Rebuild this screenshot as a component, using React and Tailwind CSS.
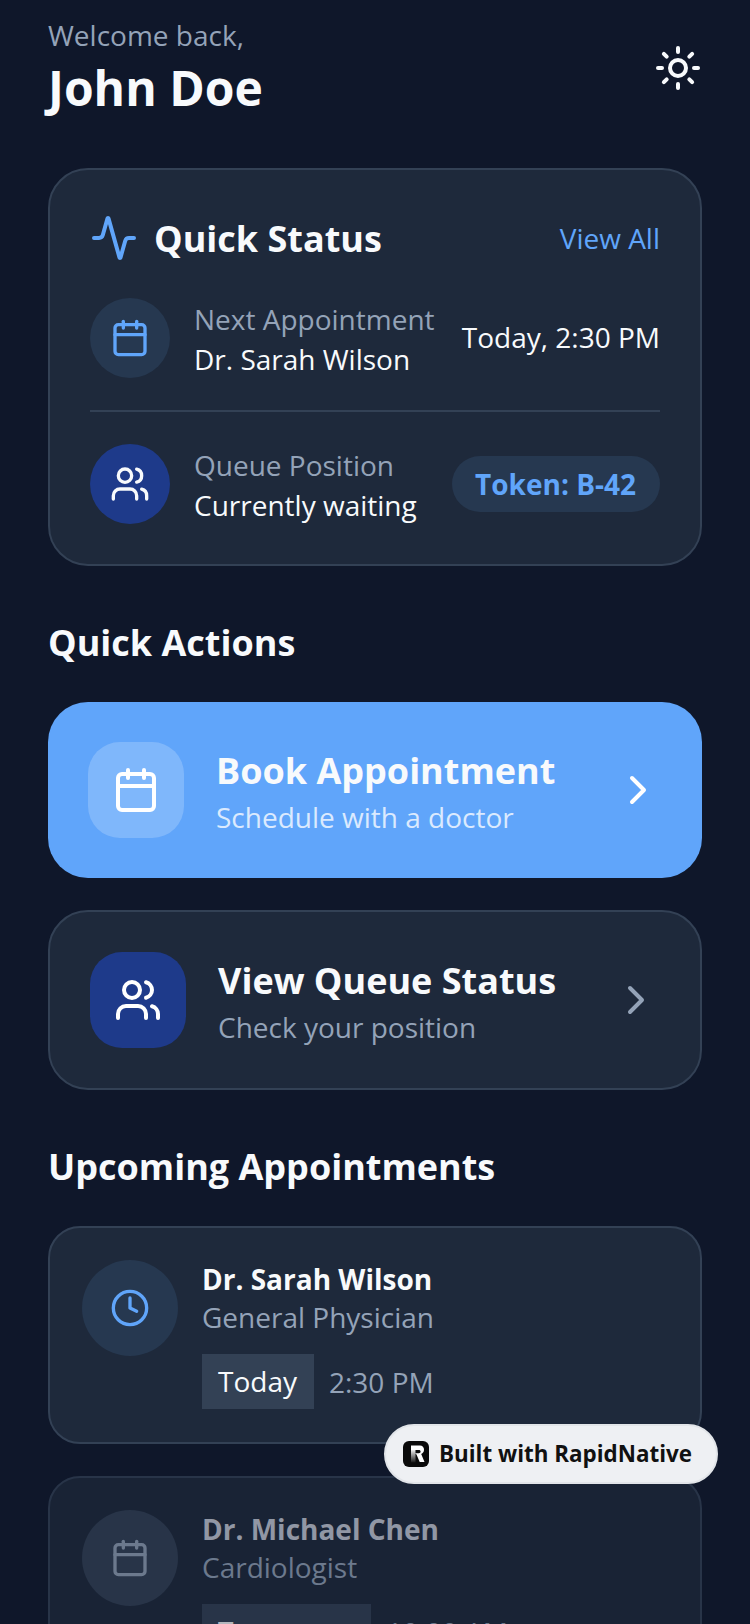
import React from "react";
import { Activity, Calendar, ChevronRight, Clock, Sun, Users } from "lucide-react";

const StatusRow = ({ icon, circle, label, value, right }) => (
  <div className="flex items-center justify-between">
    <div className="flex items-center gap-6">
      <div className={`flex h-20 w-20 items-center justify-center rounded-full ${circle}`}>{icon}</div>
      <div className="-mb-px pt-px">
        <p className="text-[28px] leading-10 text-[#94a3b8]">{label}</p>
        <p className="text-[28px] leading-10 text-[#f8fafc]">{value}</p>
      </div>
    </div>
    {right}
  </div>
);

const ActionCard = ({ card, box, icon, title, sub, subColor, chevron }) => (
  <div className={`flex items-center justify-between rounded-[40px] p-10 ${card}`}>
    <div className="flex items-center gap-8">
      <div className={`flex h-24 w-24 items-center justify-center rounded-[32px] ${box}`}>{icon}</div>
      <div className="py-0.5">
        <p className="text-[36px] leading-[54px] font-bold text-[#f8fafc]">{title}</p>
        <p className={`text-[28px] leading-[38px] ${subColor}`}>{sub}</p>
      </div>
    </div>
    <ChevronRight size={48} strokeWidth={2} className={chevron} />
  </div>
);

const ApptCard = ({ icon, name, spec, day, time, faded }) => (
  <div className={`mb-8 flex gap-6 rounded-[32px] border-2 border-[#334155] bg-[#1e293b] px-8 pt-8 pb-[33px] ${faded ? "opacity-70" : ""}`}>
    <div className={`flex h-24 w-24 shrink-0 items-center justify-center rounded-full ${faded ? "bg-[#334155]" : "bg-[#263850]"}`}>{icon}</div>
    <div>
      <p className={`text-[28px] leading-[38px] font-bold ${faded ? "text-[#c9ced9]" : "text-[#f8fafc]"}`}>{name}</p>
      <p className="mt-0.5 text-[28px] leading-[34px] text-[#94a3b8]">{spec}</p>
      <div className="mt-5 flex items-center gap-[15px]">
        <span className="bg-[#334155] pt-[7px] pr-[17px] pb-2 pl-4 text-[28px] leading-10 text-[#f8fafc]">{day}</span>
        <span className="text-[28px] leading-10 text-[#94a3b8]">{time}</span>
      </div>
    </div>
  </div>
);

export default function App() {
  return (
    <div className="relative h-[1624px] w-[750px] overflow-hidden bg-[#0f172a] px-12 font-['Open_Sans',sans-serif]">
      <header className="flex items-center justify-between pt-[15px]">
        <div>
          <p className="mb-px text-[28px] leading-10 text-[#94a3b8]">Welcome back,</p>
          <h1 className="text-[48px] leading-[64px] font-bold text-[#f8fafc]">John Doe</h1>
        </div>
        <Sun size={48} strokeWidth={2} className="text-[#f8fafc]" />
      </header>

      <section className="mt-12 rounded-[40px] border-2 border-[#334155] bg-[#1e293b] p-10">
        <div className="mb-8 flex items-center justify-between">
          <div className="flex items-center gap-4">
            <Activity size={48} strokeWidth={2} className="text-[#60a5fa]" />
            <h2 className="pt-0.5 text-[36px] leading-[54px] font-bold text-[#f8fafc]">Quick Status</h2>
          </div>
          <span className="text-[28px] leading-10 text-[#60a5fa]">View All</span>
        </div>
        <StatusRow
          circle="bg-[#263850]"
          icon={<Calendar size={40} strokeWidth={2} className="text-[#60a5fa]" />}
          label="Next Appointment"
          value="Dr. Sarah Wilson"
          right={<span className="mb-0.5 text-[28px] leading-10 text-[#f8fafc]">Today, 2:30 PM</span>}
        />
        <div className="my-8 h-0.5 bg-[#334155]" />
        <StatusRow
          circle="bg-[#1e3a8a]"
          icon={<Users size={40} strokeWidth={2} className="text-[#f8fafc]" />}
          label="Queue Position"
          value="Currently waiting"
          right={
            <span className="rounded-full bg-[#263850] py-2 pr-6 pl-[23px] text-[28px] leading-10 font-bold text-[#60a5fa]">Token: B-42</span>
          }
        />
      </section>

      <h2 className="mt-[49px] mb-[31px] text-[36px] leading-[56px] font-bold text-[#f8fafc]">Quick Actions</h2>
      <ActionCard
        card="bg-[#60a5fa]"
        box="bg-white/20"
        icon={<Calendar size={48} strokeWidth={2} className="text-white" />}
        title="Book Appointment"
        sub="Schedule with a doctor"
        subColor="text-[#dbeafe]"
        chevron="text-white"
      />
      <div className="h-8" />
      <ActionCard
        card="border-2 border-[#334155] bg-[#1e293b]"
        box="bg-[#1e3a8a]"
        icon={<Users size={48} strokeWidth={2} className="text-white" />}
        title="View Queue Status"
        sub="Check your position"
        subColor="text-[#94a3b8]"
        chevron="text-[#94a3b8]"
      />

      <h2 className="mt-[49px] mb-[31px] text-[36px] leading-[56px] font-bold text-[#f8fafc]">Upcoming Appointments</h2>
      <ApptCard
        icon={<Clock size={40} strokeWidth={2} className="text-[#60a5fa]" />}
        name="Dr. Sarah Wilson"
        spec="General Physician"
        day="Today"
        time="2:30 PM"
      />
      <ApptCard
        faded
        icon={<Calendar size={40} strokeWidth={2} className="text-[#94a3b8]" />}
        name="Dr. Michael Chen"
        spec="Cardiologist"
        day="Tomorrow"
        time="10:00 AM"
      />

      <div className="absolute top-[1424px] left-[384px] flex h-[60px] w-[334px] items-center gap-2.5 rounded-full border-2 border-[#e2e5e9] bg-[#eef0f3] pl-[17px]">
        <svg width="26" height="26" viewBox="0 0 26 26">
          <defs>
            <linearGradient id="rapidStem" x1="0" y1="0" x2="0" y2="1">
              <stop offset="0" stopColor="#fff" />
              <stop offset="1" stopColor="#fff" stopOpacity="0.05" />
            </linearGradient>
          </defs>
          <rect width="26" height="26" rx="6" fill="#0a0a0a" />
          <path d="M8 4.5h9a4 4 0 0 1 4 4.3c0 2-1 3.5-2.8 4.2l3.3 8h-4.8l-3.2-7.5-1.5-1.3h3.8c1.2 0 1.8-.7 1.8-1.7s-.6-1.6-1.8-1.6H8z" fill="#fff" />
          <rect x="8" y="8" width="4.5" height="13.5" fill="url(#rapidStem)" />
        </svg>
        <span className="text-[22.4px] leading-7 font-bold text-[#111]">Built with RapidNative</span>
      </div>
    </div>
  );
}
